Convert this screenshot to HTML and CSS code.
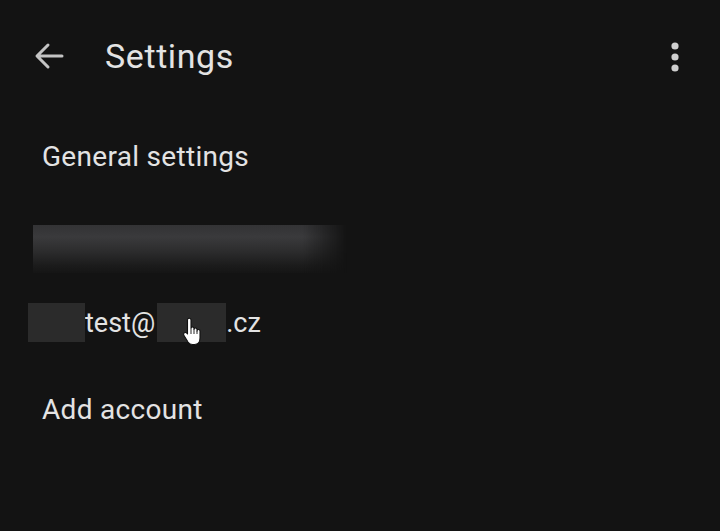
FILE: index.html
```html
<!DOCTYPE html>
<html>
<head>
<meta charset="utf-8">
<link rel="stylesheet" href="styles.css">
</head>
<body>
<div class="app">
  <header class="topbar">
    <svg class="back" width="30" height="28" viewBox="0 0 30 28"><path d="M28 14H4M14 3L3 14l11 11" fill="none" stroke="#c4c4c4" stroke-width="3" stroke-linecap="round" stroke-linejoin="round"/></svg>
    <h1 class="title">Settings</h1>
    <svg class="more" width="10" height="30" viewBox="0 0 10 30"><circle cx="5" cy="4" r="3.6" fill="#cfcfcf"/><circle cx="5" cy="15" r="3.6" fill="#cfcfcf"/><circle cx="5" cy="26" r="3.6" fill="#cfcfcf"/></svg>
  </header>
  <div class="item general">General settings</div>
  <div class="blurred"></div>
  <div class="item email">
    <span class="redact r1"></span><span>test@</span><span class="redact r2"><svg class="cursor" width="21" height="29" viewBox="0 0 20 29"><path d="M5 3a1.75 1.75 0 0 1 3.5 0V11.5a1.5 1.5 0 0 1 3 0V12.5a1.5 1.5 0 0 1 3 0V14a1.5 1.5 0 0 1 3 0V21C17.5 25 15 27.5 12 27.5H10C8 27.5 6.5 26.5 5.5 25L1.5 18.5C0.8 17.5 1 16.3 2 15.8C3 15.3 4 15.7 4.6 16.5L5 17Z" fill="#fff" stroke="#111" stroke-width="1.1" stroke-linejoin="round"/><path d="M8.5 12v5M11.5 12.5v4.5M14.5 14v3" stroke="#111" stroke-width="0.9" fill="none"/></svg></span><span>.cz</span>
  </div>
  <div class="item add">Add account</div>
</div>
</body>
</html>
```
FILE: styles.css
```css
html, body {
  margin: 0;
  padding: 0;
  background: #131313;
}
.app {
  width: 720px;
  height: 531px;
  background: #131313;
  font-family: Roboto, "Noto Sans", sans-serif;
  color: #e3e3e3;
  overflow: hidden;
}
.topbar {
  display: flex;
  align-items: center;
  height: 56px;
  padding: 28px 0 0 34px;
}
.back {
  flex: none;
}
.title {
  margin: 0 0 0 41px;
  font-size: 34px;
  font-weight: 400;
  letter-spacing: 0.6px;
  flex: 1;
  line-height: 40px;
}
.more {
  margin-right: 40px;
  margin-top: 2px;
}
.item {
  font-size: 28px;
  line-height: 34px;
  padding-left: 42px;
  letter-spacing: 0.3px;
}
.general {
  margin-top: 56px;
}
.blurred {
  margin: 51px 0 0 33px;
  width: 314px;
  height: 48px;
  background: linear-gradient(180deg, #333335 0%, #3a3a3c 25%, #2c2c2d 55%, #1b1b1b 85%, #151515 100%);
  -webkit-mask-image: linear-gradient(90deg, #000 0%, #000 86%, transparent 100%);
  mask-image: linear-gradient(90deg, #000 0%, #000 86%, transparent 100%);
}
.email {
  display: flex;
  align-items: center;
  padding-left: 28px;
  margin-top: 30px;
  height: 39px;
  font-size: 27px;
  letter-spacing: 0;
}
.redact {
  display: inline-block;
  height: 39px;
  background: #2b2b2b;
  position: relative;
}
.r1 { width: 57px; }
.r2 { width: 69px; margin-left: 2px; }
.cursor {
  position: absolute;
  left: 25px;
  top: 14px;
}
.add {
  margin-top: 51px;
}
```
